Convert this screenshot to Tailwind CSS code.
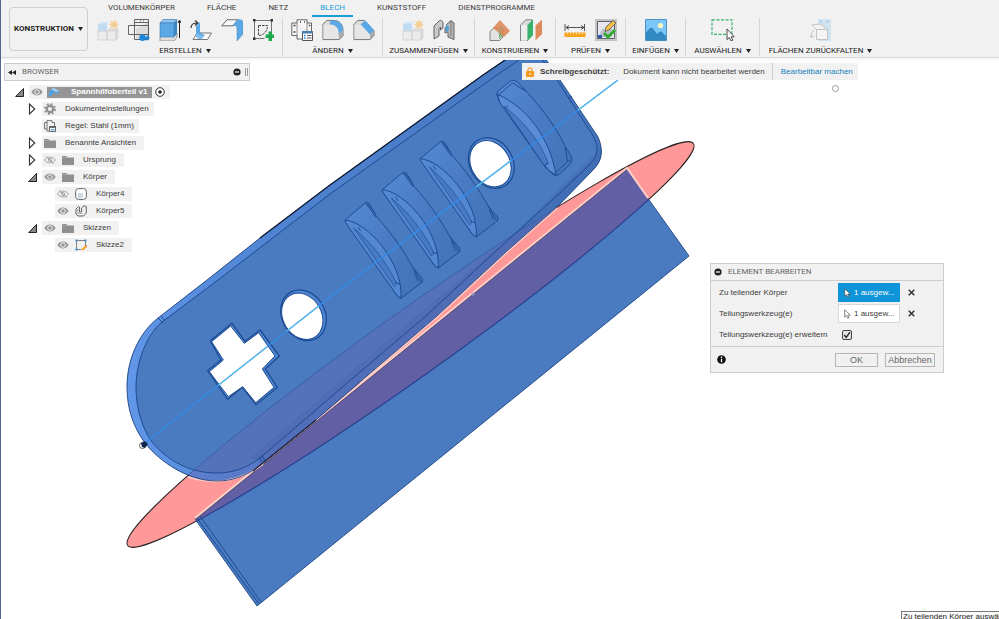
<!DOCTYPE html>
<html lang="de">
<head>
<meta charset="utf-8">
<meta name="viewport" content="width=device-width, initial-scale=1">
<title>Spannhilfoberteil v1</title>
<script src="https://cdn.jsdelivr.net/npm/@tailwindcss/browser@4"></script>
</head>
<body class="flex min-h-screen flex-col overflow-hidden border-l border-[#52658c] bg-white font-['Liberation_Sans',Arial,sans-serif] text-[8px] leading-[10px] text-[#3c3c3c]">

<!-- Shared symbols -->
<svg class="hidden" aria-hidden="true">
  <symbol id="caret" viewBox="0 0 5 4"><path d="M0 0h5L2.500 4z" fill="#222"/></symbol>
  <symbol id="closed" viewBox="0 0 8 12"><path d="M1.500 1v10L6.800 6z" fill="#fff" stroke="#333" stroke-width="1.100"/></symbol>
  <symbol id="open" viewBox="0 0 9 9"><path d="M8.500.5v8H.7z" fill="#888" stroke="#222"/></symbol>
  <symbol id="eye" viewBox="0 0 12 8"><path d="M.3 4C3-.6 9-.6 11.700 4 9 8.600 3 8.600.3 4z" fill="#979797"/><circle cx="6" cy="4" r="2.300" fill="#979797" stroke="#f1f1f1"/></symbol>
  <symbol id="eye-off" viewBox="0 0 12 8"><path d="M.5 4C3 .1 9 .1 11.500 4 9 7.900 3 7.900.5 4z" fill="none" stroke="#a0a0a0" stroke-width=".9"/><circle cx="6" cy="4" r="1.700" fill="none" stroke="#a0a0a0" stroke-width=".9"/><path d="M2 .3l8 7.400" stroke="#a0a0a0"/></symbol>
  <symbol id="folder" viewBox="0 0 12 10"><path d="M0 1h4.500l1 1.500H12V10H0z" fill="#8f8f8f"/><path d="M0 2.500h5.500" stroke="#b9b9b9" stroke-width=".6"/></symbol>
  <symbol id="cubes" viewBox="0 0 22 22">
    <path d="M1 5l3-2h8l-2 2v6H1z" fill="#cfe4f5"/><path d="M1 5h9v7H1z" fill="#bfdcf3"/>
    <path d="M1 12h9v9H1zM10 12h9v9h-9z" fill="#ececec" stroke="#cfcfcf" stroke-width=".8"/>
    <path d="M19 12l2-2v9l-2 2zM10 12l2-2h9l-2 2" fill="#dedede" stroke="#cfcfcf" stroke-width=".6"/>
    <path d="M17 0l1.100 3 2.900-1.300L19.700 4.500l2.300 1-2.300 1 1.300 2.900-2.900-1.300L17 11l-1.100-2.900L13 9.400l1.300-2.900-2.800-1 2.800-1L13 1.700 15.900 3z" fill="#f4cf95"/>
  </symbol>
  <symbol id="cursor" viewBox="0 0 10 14"><path d="M1 1v10.500l2.600-2.300 1.800 4 1.800-.8-1.800-3.900H9z" fill="#fff" stroke="#444" stroke-width=".9"/></symbol>
  <symbol id="minus" viewBox="0 0 8 8"><circle cx="4" cy="4" r="3.600" fill="#222"/><path d="M2 4h4" stroke="#fff" stroke-width="1.200"/></symbol>
</svg>

<header class="flex shrink-0 border-b border-[#dadada] bg-[#f1f1f1] font-[Roboto,sans-serif]">
  <button class="mt-[7px] ml-2 flex h-11 w-[79px] shrink-0 items-center justify-center gap-1 rounded-[4px] border border-[#cfcfcf] font-bold text-[#222]">KONSTRUKTION <svg class="h-1 w-[5px]"><use href="#caret"/></svg></button>
  <div>
    <nav class="flex h-[17px] gap-4 pl-3 leading-[15px]">
      <a href="#" class="px-2">VOLUMENKÖRPER</a>
      <a href="#" class="px-2">FLÄCHE</a>
      <a href="#" class="px-2">NETZ</a>
      <a href="#" class="border-b-2 border-[#1b9dd9] px-2 text-[#1b9dd9]">BLECH</a>
      <a href="#" class="px-2">KUNSTSTOFF</a>
      <a href="#" class="px-2">DIENSTPROGRAMME</a>
    </nav>
    <div class="mt-px mb-px flex whitespace-nowrap">
      <section class="flex w-[195px] flex-col items-center gap-[5px] border-r border-[#d6d6d6] pt-px">
        <div class="flex gap-[9px]">
          <button aria-label="Neue Komponente"><svg class="size-[22px]"><use href="#cubes"/></svg></button>
          <button aria-label="Abwicklung"><svg class="size-[22px]" viewBox="0 0 22 22"><path d="M8 10l12-7v17H8z" fill="#dcdcdc"/><path d="M6.500.5h14v20h-14zM.5 6.500h20v9H.5zM6.500 3.500h14M12 2h1m2 0h1" fill="none" stroke="#555" stroke-width=".9"/><path d="M15 19h5" stroke="#1b86dd" stroke-width="2"/><path d="M18.500 16l3.500 3-3.500 3z" fill="#1b86dd"/><circle cx="14.500" cy="18.800" r="3.200" fill="#1b86dd"/></svg></button>
          <button aria-label="Extrusion"><svg class="size-[22px]" viewBox="0 0 22 22"><path d="M1 17h14l3-3v4l-3 4H1z" fill="#ddd" stroke="#777" stroke-width=".7"/><path d="M1 4l3-3.500h14L15 4z" fill="#8cc4f2" stroke="#3c6c98" stroke-width=".6"/><path d="M1 4h14v14H1z" fill="#5aa9e6" stroke="#3c7cb2" stroke-width=".6"/><path d="M15 4l3-3.500V15l-3 3z" fill="#3b86c4"/><path d="M20.500 2v17M18.900 4l1.600-3L22 4" stroke="#222" fill="none"/></svg></button>
          <button aria-label="Biegen"><svg class="size-[22px]" viewBox="0 0 22 22"><path d="M1 9C1 5 3 4 7 4M5 1.500L8 4 5 6.500" stroke="#333" fill="none" stroke-width="1.200"/><path d="M7 14h14.500l-4 6.500H3z" fill="#fafafa" stroke="#555" stroke-width=".8"/><path d="M10 3v9c0 2 2 3 5 4l-4 4.500c-4-1-6-3-5-6V7z" fill="#5aa9e6"/><path d="M7 14c1 2 4 2.500 7 2.500l-3 3.500c-3-.5-5-2-5-4z" fill="#84bfec"/></svg></button>
          <button aria-label="Flansch"><svg class="size-[22px]" viewBox="0 0 22 22"><path d="M6 .8h11l-5 6H.8z" fill="#fafafa" stroke="#555" stroke-width=".9"/><path d="M16.500.8H19c2 0 3 1 3 3V15l-6 7V9c0-2-1.500-2.500-4-2.500z" fill="#5aa9e6" stroke="#3f88bf" stroke-width=".5"/></svg></button>
          <button aria-label="Skizze erstellen"><svg class="size-[22px]" viewBox="0 0 22 22"><path d="M2.500 1.500h17v13M2.500 1.500v18h10" fill="none" stroke="#666" stroke-width=".9"/><path d="M6.500 6.500h9c0 6-4 10-9 10z" fill="none" stroke="#444" stroke-dasharray="2.500 1"/><path d="M1 0h2.500v2.500H1zM18.500 0H21v2.500h-2.500zM1 18.500h2.500V21H1z" fill="#333"/><path d="M16.500 12.500h3.500v3h3v3.500h-3v3h-3.500v-3h-3v-3.500h3z" fill="#20a84e"/></svg></button>
        </div>
        <button class="flex items-center gap-1 text-[#222]">ERSTELLEN <svg class="h-1 w-[5px]"><use href="#caret"/></svg></button>
      </section>
      <section class="flex w-[100px] flex-col items-center gap-[5px] border-r border-[#d6d6d6] pt-px">
        <div class="flex gap-[9px]">
          <button aria-label="Blechregeln"><svg class="size-[22px]" viewBox="0 0 22 22"><path d="M6 4V.8h10V4h4.500v9M6 4H.8v12.500H6V20h5" fill="#f8f8f8" stroke="#555" stroke-width=".9"/><path d="M6 4v13M16 4v8" stroke="#777" stroke-width=".8"/><path d="M2.500 6.500h2M2.500 13h2M17.800 6.500h1.500M9 3h1m3 0h1" stroke="#444" stroke-width="1.300"/><path d="M11.500 12.500h10v9h-10z" fill="#fff" stroke="#555"/><path d="M11 12h11v2.500H11z" fill="#4d7fae"/><path d="M13 16.500h1.500M13 19h1.500" stroke="#1b86dd" stroke-width="1.400"/><path d="M16 16.500h4.500M16 19h4.500" stroke="#555"/></svg></button>
          <button aria-label="Abrunden"><svg class="size-[22px]" viewBox="0 0 23 22"><path d="M1 21V5l4-4h7c7 0 10 5 10 11v5l-4 4z" fill="#d9d9d9" stroke="#666" stroke-width=".9"/><path d="M1.500 5.500H7c7 0 10.500 4 10.500 9v6h-16z" fill="#e6e6e6"/><path d="M9 1h4c6 0 9.500 6 9 10.500l-4.500 4C18 9 14 5 8 5z" fill="#5aa9e6"/><path d="M17.500 15l4.500-4v6l-4 4z" fill="#aaa"/></svg></button>
          <button aria-label="Fase"><svg class="size-[22px]" viewBox="0 0 23 22"><path d="M1 21V5l4-4h7l10 11v5l-4 4z" fill="#d9d9d9" stroke="#666" stroke-width=".9"/><path d="M1.500 5.500h6L18 15v5.500H1.500z" fill="#e6e6e6"/><path d="M8 5l5-4 9.500 10.500-5 4z" fill="#5aa9e6"/><path d="M17.500 15.500l4.500-4V17l-4 4z" fill="#aaa"/></svg></button>
        </div>
        <button class="flex items-center gap-1 text-[#222]">ÄNDERN <svg class="h-1 w-[5px]"><use href="#caret"/></svg></button>
      </section>
      <section class="flex w-[92px] flex-col items-center gap-[5px] border-r border-[#d6d6d6] pt-px">
        <div class="flex gap-[9px]">
          <button aria-label="Neue Komponente"><svg class="size-[22px]"><use href="#cubes"/></svg></button>
          <button aria-label="Verbindung"><svg class="size-[22px]" viewBox="0 0 22 22"><path d="M1 20V7l5-5c2-1.500 4 0 4 2v5l-2.500 2V8L6 9.500V17z" fill="#c9c9c9" stroke="#555" stroke-width=".9"/><path d="M21 20.500V4l-3-2.500-4.500 4V8l-1.500 1v5l2-1 1 .5V18z" fill="#b8b8b8" stroke="#555" stroke-width=".9"/><path d="M18 2v15" stroke="#777"/><path d="M12.500 7c2-1 3.500 0 3.500 2.500S15 13 13 12.500z" fill="#4d9fd8"/></svg></button>
        </div>
        <button class="flex items-center gap-1 text-[#222]">ZUSAMMENFÜGEN <svg class="h-1 w-[5px]"><use href="#caret"/></svg></button>
      </section>
      <section class="flex w-[81px] flex-col items-center gap-[5px] border-r border-[#d6d6d6] pt-px">
        <div class="flex gap-[9px]">
          <button aria-label="Versatzebene"><svg class="size-[22px]" viewBox="0 0 22 22"><path d="M1 21.500v-9L5 9h9v9l-3.500 3.500z" fill="#e2e2e2" stroke="#777" stroke-width=".9"/><path d="M10 12l4-4v9l-4 3z" fill="#78b98b"/><path d="M4 9l7-8 10 11-6 6z" fill="#dd8455" opacity=".88"/><path d="M10 15V12l4-3.500" fill="none" stroke="#8fae84"/></svg></button>
          <button aria-label="Mittelebene"><svg class="size-[22px]" viewBox="0 0 22 22"><path d="M.5 22V6L6 .8h6V16l-5 6z" fill="#dadada" stroke="#777" stroke-width=".9"/><path d="M1 6h6v15.500H1z" fill="#ededed"/><path d="M7.500 6L13 .5V16l-5.500 6z" fill="#38b46a"/><path d="M15.500 6.500L22 .5V15l-6.500 6.500z" fill="#df8a5b"/></svg></button>
        </div>
        <button class="flex items-center gap-1 text-[#222]">KONSTRUIEREN <svg class="h-1 w-[5px]"><use href="#caret"/></svg></button>
      </section>
      <section class="flex w-[70px] flex-col items-center gap-[5px] border-r border-[#d6d6d6] pt-px">
        <div class="flex gap-[9px]">
          <button aria-label="Messen"><svg class="size-[22px]" viewBox="0 0 22 22"><path d="M1 5v7M20.500 5v7M2 8.500h18M5 6.500l-3 2 3 2M17 6.500l3 2-3 2" fill="none" stroke="#444" stroke-width=".9"/><path d="M.5 13.500h21v4.500H.5z" fill="#f9a21a"/><path d="M3.500 13.500v2m3-2v2m3-2v2m3-2v2m3-2v2m3-2v2" stroke="#fbe3b5" stroke-width=".9"/></svg></button>
          <button aria-label="Analyse"><svg class="size-[22px]" viewBox="0 0 22 22"><path d="M0 0h22v22H0z" fill="#c4c4c4"/><path d="M2.500 2.500h17v17h-17z" fill="#e6e6ee" stroke="#5d6270"/><path d="M4 17l3-7h6l4-5v13H4z" fill="#b9bfcc"/><path d="M3 16h4v3H3z" fill="#3159a8"/><path d="M11 8l7-6.500L21 4l-7 7-4 1.500z" fill="#f5c04c" stroke="#444" stroke-width=".7"/><path d="M9 14l4 4 7-7" fill="none" stroke="#35a82e" stroke-width="3"/></svg></button>
        </div>
        <button class="flex items-center gap-1 text-[#222]">PRÜFEN <svg class="h-1 w-[5px]"><use href="#caret"/></svg></button>
      </section>
      <section class="flex w-[60px] flex-col items-center gap-[5px] border-r border-[#d6d6d6] pt-px">
        <button aria-label="Bild einfügen"><svg class="size-[22px]" viewBox="0 0 22 22"><path d="M.5.5h21v21H.5z" fill="#7cc6f7" stroke="#4b94c8"/><circle cx="15.500" cy="6.500" r="2.600" fill="#fdf6bb"/><path d="M1 14c3-5 6-7 8-3l3 4c2-2 4-4 6-1l3 3v4.500H1z" fill="#3288c0"/></svg></button>
        <button class="flex items-center gap-1 text-[#222]">EINFÜGEN <svg class="h-1 w-[5px]"><use href="#caret"/></svg></button>
      </section>
      <section class="flex w-[74px] flex-col items-center gap-[5px] border-r border-[#d6d6d6] pt-px">
        <button aria-label="Auswahl"><svg class="h-[22px] w-6" viewBox="0 0 24 22"><path d="M1 .8h20v14.500H1z" fill="none" stroke="#35b36b" stroke-width="1.200" stroke-dasharray="3 1.500"/><path d="M16 10v10.500l2.400-2 1.600 3.500 1.800-.8-1.600-3.400h3z" fill="#fff" stroke="#333" stroke-width=".9"/></svg></button>
        <button class="flex items-center gap-1 text-[#222]">AUSWÄHLEN <svg class="h-1 w-[5px]"><use href="#caret"/></svg></button>
      </section>
      <section class="flex w-[121px] flex-col items-center gap-[5px] pt-px">
        <button aria-label="Flächen zurückfalten"><svg class="size-[22px]" viewBox="0 0 22 22"><path d="M8 0h13v22H8z" fill="#cfe3f1"/><circle cx="11" cy="2.500" r="1" fill="#9fc3dc"/><circle cx="17.500" cy="2.500" r="1" fill="#9fc3dc"/><path d="M6.500 10.500h11v10h-11zM6.500 10.500L2 6l8-1 7.500 5.500z" fill="#f4f4f4" stroke="#c4c4c4"/><path d="M4 11c-2 1-3 4-2.500 7M0 16l1.500 2.500L4 17" fill="none" stroke="#c4c4c4"/></svg></button>
        <button class="flex items-center gap-1 text-[#222]">FLÄCHEN ZURÜCKFALTEN <svg class="h-1 w-[5px]"><use href="#caret"/></svg></button>
      </section>
    </div>
  </div>
</header>

<main class="relative flex-1 overflow-hidden border-t-2 border-[#f6f6f6]">
  <!-- 3D viewport -->
  <svg class="absolute top-0 left-0 h-[559px] w-[998px]" viewBox="1 60 998 559" role="img" aria-label="3D-Modell">
    <defs>
      <linearGradient id="rim" x1="0" y1="0" x2="1" y2="0"><stop offset="0" stop-color="#6196e8"/><stop offset=".3" stop-color="#4f84d2"/><stop offset="1" stop-color="#4574bc"/></linearGradient>
      <linearGradient id="ribtop" x1="0" y1="0" x2="1" y2="1"><stop offset="0" stop-color="#568ad4"/><stop offset=".45" stop-color="#4a7bc4"/><stop offset="1" stop-color="#4272b8"/></linearGradient>
      <clipPath id="plate"><path d="M627 169L689 256 257 606 195 519z"/></clipPath>
      <path id="outer" d="M508 58L483 75 330 185 260 238 207 280 158 318C139 333 127 359 127 387 127 410 134 428 145 443 160 462 188 481 217 481 235 481 250 474 263 463L310 425 360 382 437 316 507 251 557 207 593 170C602 161 604 151 598 137L560 80 545 58z"/>
      <path id="inner" d="M522 58L497 75 330 194 218 280 162 322C147 334 136 362 136 387 136 408 142 428 152 442 168 461 190 473 217 473 234 473 248 467 260 458L360 372 427 315 497 250 560 193 590 164C599 155 599 146 592 134L557 80 541 58z"/>
      <clipPath id="body"><use href="#outer"/></clipPath>
      <g id="rib" stroke-linejoin="round">
        <path d="M45 435L108 382 118 386 140 425C185 475 220 525 250 580L277 610 277 621 213 670 203 664z" fill="url(#ribtop)" stroke="#1d4b93" stroke-width="3"/>
        <path d="M45 435C110 440 220 560 213 670L203 664 46 442z" fill="#5588d2" stroke="#1d4b93" stroke-width="3"/>
        <path d="M72 460C120 500 170 560 200 625L193 634z" fill="#4879c4" stroke="#1d4b93" stroke-width="2"/>
        <path d="M84 456l8 12M196 622l14 6M108 385l30 42M112 386l24 30M250 577l23 43M252 588l12 30" fill="none" stroke="#1d4b93" stroke-width="3"/>
      </g>
    </defs>

    <ellipse cx="410.500" cy="344.500" rx="347" ry="33" transform="rotate(-35.400 410.500 344.500)" fill="#ff9898" stroke="#2b2323" stroke-width="1"/>

    <path d="M627 169L689 256 257 606 195 519z" fill="#4a7bc0" stroke="#27508f" stroke-width="1"/>
    <g clip-path="url(#plate)">
      <ellipse cx="410.500" cy="344.500" rx="347" ry="33" transform="rotate(-35.400 410.500 344.500)" fill="#625fa5" stroke="#27408f" stroke-width="1.200"/>
      <path d="M197 518l62 86M200 516l61 86" stroke="#1d4b93"/>
    </g>
    <path d="M648 198L627 168 195 518" fill="none" stroke="#ffd0c8" stroke-width="2"/>
    <path d="M627 169.500L195 520" stroke="#5b4a60" stroke-width=".8"/>

    <use href="#outer" fill="url(#rim)"/>
    <use href="#inner" fill="#4a7bc0"/>
    <g clip-path="url(#body)">
      <path d="M437 316l70-65 50-44 45-40v-20L520 228 250 458l14 6z" fill="#3d68b0" opacity=".5"/>
      <ellipse cx="410.500" cy="344.500" rx="347" ry="33" transform="rotate(-35.400 410.500 344.500)" fill="#6464b0" fill-opacity=".38" stroke="#3c5fa8" stroke-width=".9"/>
    </g>
    <use href="#inner" fill="none" stroke="#1d4b93"/>
    <path d="M188 477C220 487 245 478 263 464M360 383L437 317 507 252 557 208" fill="none" stroke="#ffd0c8" stroke-width="1.800"/>
    <use href="#outer" fill="none" stroke="#1b3f7c" stroke-width=".9"/>
    <path d="M508 58L483 75 330 185 260 238" fill="none" stroke="#101c34" stroke-width="1.300"/>
    <path d="M253 471L316 420" stroke="#1d2440" stroke-width="1.300"/>
    <path d="M158 318l5 5M161 316l4 5M259 457l4 6M262 455l3 6M568 99l4-3" stroke="#1d4b93"/>

    <!-- Grip ribs -->
    <g transform="translate(330 75) scale(.33333)">
      <use href="#rib"/>
      <use href="#rib" x="112" y="-91"/>
      <use href="#rib" x="226" y="-184"/>
      <path d="M500 58Q502 48 512 42L540 19Q550 12 562 20L592 53C640 105 680 160 706 215L722 240Q730 255 722 266L690 296Q678 306 666 296L645 275 508 80z" fill="url(#ribtop)" stroke="#1d4b93" stroke-width="3"/>
      <path d="M502 58C590 95 660 190 678 300L655 285 510 84z" fill="#5a8dd6" stroke="#1d4b93" stroke-width="3"/>
      <path d="M523 95C590 145 635 210 655 265L643 272z" fill="#4879c4" stroke="#1d4b93" stroke-width="2"/>
      <path d="M503 62L548 24 590 50M706 215l6 45-34 32M712 260l10-5M522 100l12-8M642 272l12-8" fill="none" stroke="#1d4b93" stroke-width="3"/>
    </g>

    <!-- Through holes -->
    <ellipse cx="491.300" cy="163" rx="21.500" ry="26.500" transform="rotate(-30 491.300 163)" fill="#4f85d2" stroke="#1d4b93" stroke-width="1.300"/>
    <ellipse cx="490.500" cy="163.700" rx="19.300" ry="24.300" transform="rotate(-30 490.500 163.700)" fill="#fff" stroke="#1d4b93"/>
    <ellipse cx="303.500" cy="315.300" rx="21.500" ry="26.500" transform="rotate(-30 303.500 315.300)" fill="#4f85d2" stroke="#1d4b93" stroke-width="1.300"/>
    <ellipse cx="302.300" cy="316.300" rx="19.300" ry="24.300" transform="rotate(-30 302.300 316.300)" fill="#fff" stroke="#1d4b93"/>
    <g transform="translate(110 280) scale(.33333)" stroke="#1d4b93" stroke-linejoin="round">
      <path d="M366 130L405 184 450 150 508 228 466 267 502 322 438 374 397 322 353 358 293 272 333 240 301 182z" fill="#4f85d2" stroke-width="4"/>
      <path d="M362 138L403 190 446 158 495 228 457 267 492 322 437 368 398 320 355 350 298 275 340 240 305 185z" fill="#fff" stroke-width="3"/>
    </g>

    <!-- Sketch axis -->
    <path d="M145 443L330 297 618 80" fill="none" stroke="#2f8ee8" stroke-width="1.200"/>
    <path d="M218 385.500L267 347M287 331L319 306M476 187L511 160.500M578 110L618 80" stroke="#62bdec" stroke-width="1.300"/>
    <circle cx="142.500" cy="445.500" r="3" fill="#fff" stroke="#666"/>
    <path d="M141 443l4-2 3 3-3 4-3-1z" fill="#10264f"/>
    <circle cx="473" cy="294" r="1.600" fill="#9a98c8"/>
    <circle cx="835.500" cy="88.500" r="3" fill="none" stroke="#999"/>
  </svg>

  <!-- Browser panel -->
  <aside class="relative ml-[3px] w-[246px] pt-[3px]">
    <div class="flex h-[18px] items-center border border-[#cdcdcd] bg-[#f1f1f1] pr-px pl-[3px]">
      <svg class="h-[5px] w-2" viewBox="0 0 8 5"><path d="M4 0v5L0 2.500zM8 0v5L4 2.500z" fill="#222"/></svg>
      <h2 class="ml-[6px] flex-1 font-[Roboto,sans-serif] text-[#666]">BROWSER</h2>
      <button aria-label="Einklappen"><svg class="block size-2"><use href="#minus"/></svg></button>
      <span class="ml-1 h-2 w-[3px] border-x border-[#999]"></span>
    </div>
    <ul class="flex flex-col gap-[3px] pt-1">
      <li class="flex h-[14px] items-center pl-[11px]"><svg class="mr-[5px] size-[9px]"><use href="#open"/></svg>
        <div class="flex h-full items-center bg-[#f1f1f1] pr-[5px] pl-[2px]"><svg class="mr-1 h-2 w-3"><use href="#eye"/></svg>
          <span class="flex h-[11px] items-center bg-[#959595] pr-[5px] pl-[2px] font-bold text-white"><svg class="mr-3 h-2 w-[10px]" viewBox="0 0 10 8"><path d="M0 4l3-3 3 1 4 1v3L5 4 2 8H0z" fill="#4aa3e4"/><path d="M2 1l3-1 5 3-3 1z" fill="#a5d3f5"/></svg>Spannhilfoberteil v1</span>
          <svg class="ml-[3px] size-[10px]" viewBox="0 0 10 10"><circle cx="5" cy="5" r="4.300" fill="#fff" stroke="#333"/><circle cx="5" cy="5" r="1.800" fill="#222"/></svg></div></li>
      <li class="flex h-[14px] items-center pl-6"><svg class="mr-[6px] h-3 w-2"><use href="#closed"/></svg>
        <div class="flex h-full items-center bg-[#f1f1f1] pr-[5px] pl-[2px]"><svg class="mr-[9px] size-3" viewBox="0 0 12 12"><circle cx="6" cy="6" r="3.200" fill="none" stroke="#8f8f8f" stroke-width="2.200"/><circle cx="6" cy="6" r="5" fill="none" stroke="#8f8f8f" stroke-width="1.800" stroke-dasharray="2 1.927"/></svg>Dokumenteinstellungen</div></li>
      <li class="flex h-[14px] items-center pl-[38px]">
        <div class="flex h-full items-center bg-[#f1f1f1] pr-[5px] pl-[2px]"><svg class="mr-[9px] size-3" viewBox="0 0 12 12"><path d="M3 2.500V.6h5v1.900h2.500V6M3 2.500H.6v6.500H3v2h2M3 2.500v6.500" fill="none" stroke="#666" stroke-width=".9"/><path d="M5.500 6.500h6v5h-6z" fill="#fff" stroke="#555" stroke-width=".9"/><path d="M5 6h7v2H5z" fill="#666"/><path d="M7 9.800h3.500" stroke="#1b86dd"/></svg>Regel: Stahl (1mm)</div></li>
      <li class="flex h-[14px] items-center pl-6"><svg class="mr-[6px] h-3 w-2"><use href="#closed"/></svg>
        <div class="flex h-full items-center bg-[#f1f1f1] pr-2 pl-[2px]"><svg class="mr-[9px] h-[10px] w-3"><use href="#folder"/></svg>Benannte Ansichten</div></li>
      <li class="flex h-[14px] items-center pl-6"><svg class="mr-[6px] h-3 w-2"><use href="#closed"/></svg>
        <div class="flex h-full items-center bg-[#f1f1f1] pr-2 pl-[2px]"><svg class="mr-[6px] h-2 w-3"><use href="#eye-off"/></svg><svg class="mr-[9px] h-[10px] w-3"><use href="#folder"/></svg>Ursprung</div></li>
      <li class="flex h-[14px] items-center pl-6"><svg class="mr-[5px] size-[9px]"><use href="#open"/></svg>
        <div class="flex h-full items-center bg-[#f1f1f1] pr-2 pl-[2px]"><svg class="mr-[6px] h-2 w-3"><use href="#eye"/></svg><svg class="mr-[9px] h-[10px] w-3"><use href="#folder"/></svg>Körper</div></li>
      <li class="flex h-[14px] items-center pl-[51px]">
        <div class="flex h-full items-center bg-[#f1f1f1] pr-2 pl-[2px]"><svg class="mr-[6px] h-2 w-3"><use href="#eye-off"/></svg><svg class="mr-[9px] size-3" viewBox="0 0 12 12"><rect x=".6" y=".6" width="10.800" height="10.800" rx="3" fill="#fff" stroke="#666"/><path d="M3 5h5v5H3z" fill="#cfdae4"/></svg>Körper4</div></li>
      <li class="flex h-[14px] items-center pl-[51px]">
        <div class="flex h-full items-center bg-[#f1f1f1] pr-2 pl-[2px]"><svg class="mr-[6px] h-2 w-3"><use href="#eye"/></svg><svg class="mr-[9px] size-3" viewBox="0 0 12 12"><path d="M1 4l2.500-2.500L4.500 2v5h2V3L9 .7l2.300 1V8L8.500 11H3L1 9z" fill="#eee" stroke="#555" stroke-width=".9"/><path d="M2.800 4v4.500h4.700" fill="none" stroke="#999" stroke-width=".7"/></svg>Körper5</div></li>
      <li class="flex h-[14px] items-center pl-6"><svg class="mr-[5px] size-[9px]"><use href="#open"/></svg>
        <div class="flex h-full items-center bg-[#f1f1f1] pr-2 pl-[2px]"><svg class="mr-[6px] h-2 w-3"><use href="#eye"/></svg><svg class="mr-[9px] h-[10px] w-3"><use href="#folder"/></svg>Skizzen</div></li>
      <li class="flex h-[14px] items-center pl-[51px]">
        <div class="flex h-full items-center bg-[#f1f1f1] pr-2 pl-[2px]"><svg class="mr-[6px] h-2 w-3"><use href="#eye"/></svg><svg class="mr-[9px] size-3" viewBox="0 0 12 12"><path d="M1.500 1.500h9V7M1.500 1.500v9H6" fill="none" stroke="#666" stroke-width=".8"/><path d="M.5.500h2v2h-2zM9.500.5h2v2h-2zM.5 9.500h2v2h-2z" fill="#3a8fd6"/><path d="M6.500 11.500l.5-2 3.500-3L12 8 8.500 11z" fill="#f5a623"/><path d="M10.500 6.500L12 8v-1.500z" fill="#d33"/></svg>Skizze2</div></li>
    </ul>
  </aside>

  <!-- Read-only notice -->
  <div class="absolute top-[3px] left-[521px] flex h-[17px] items-center whitespace-nowrap bg-[#f1f1f1]">
    <svg class="ml-1 h-[10px] w-2" viewBox="0 0 8 10"><path d="M2 5V3c0-3 4-3 4 0v2" fill="none" stroke="#f59a1b" stroke-width="1.200"/><rect y="4" width="8" height="6" rx=".8" fill="#f59a1b"/><path d="M4 6v2" stroke="#fff"/></svg>
    <strong class="mr-[14px] ml-[6px]">Schreibgeschützt:</strong>
    <span>Dokument kann nicht bearbeitet werden</span>
    <a href="#" class="ml-[7px] flex h-full items-center border-l border-[#cfcfcf] pr-[5px] pl-2 text-[#1480bd]">Bearbeitbar machen</a>
  </div>

  <!-- Edit dialog -->
  <form class="absolute top-[203px] right-[55px] w-[234px] border border-[#cdcdcd] bg-[#f1f1f1]">
    <h2 class="flex h-[17px] items-center gap-[6px] border-b border-[#cdcdcd] pl-[3px] font-[Roboto,sans-serif] text-[#666]"><svg class="size-2"><use href="#minus"/></svg>ELEMENT BEARBEITEN</h2>
    <div class="grid grid-cols-[119px_62px_1fr] grid-rows-[21px_21px_21px] items-center pt-px pb-px pl-2">
      <label for="target">Zu teilender Körper</label>
      <button id="target" type="button" class="flex h-[19px] items-center gap-[3px] bg-[#0e94d8] pl-[6px] text-white"><svg class="h-[10px] w-[7px]"><use href="#cursor"/></svg>1 ausgew...</button>
      <button type="button" aria-label="Auswahl löschen" class="pl-2"><svg class="block size-[7px]" viewBox="0 0 7 7"><path d="M.7.7l5.600 5.600M6.300.7L.7 6.300" stroke="#333" stroke-width="1.500"/></svg></button>
      <label for="tool">Teilungswerkzeug(e)</label>
      <button id="tool" type="button" class="flex h-[19px] items-center gap-[3px] border border-[#d8d8d8] bg-white pl-[5px]"><svg class="h-[10px] w-[7px]"><use href="#cursor"/></svg>1 ausgew...</button>
      <button type="button" aria-label="Auswahl löschen" class="pl-2"><svg class="block size-[7px]" viewBox="0 0 7 7"><path d="M.7.7l5.600 5.600M6.300.7L.7 6.300" stroke="#333" stroke-width="1.500"/></svg></button>
      <label for="extend" class="whitespace-nowrap">Teilungswerkzeug(e) erweitern</label>
      <span class="ml-1 grid size-[10px]"><input id="extend" type="checkbox" checked class="col-start-1 row-start-1 size-[10px] appearance-none rounded-[2px] border border-[#444] bg-[#e4e4e4]"><svg class="pointer-events-none col-start-1 row-start-1 size-[10px]" viewBox="0 0 10 10"><path d="M2.200 5l2 2.500L8 2.200" fill="none" stroke="#222" stroke-width="1.300"/></svg></span>
    </div>
    <div class="flex h-[26px] items-center border-t border-[#cdcdcd] pr-2 pl-[6px] text-[9px] text-[#666]">
      <svg class="mr-auto size-[9px]" viewBox="0 0 9 9"><circle cx="4.500" cy="4.500" r="4.300" fill="#111"/><path d="M4.500 1.600v1.300M4.500 3.800v3.400" stroke="#fff" stroke-width="1.300"/></svg>
      <button type="button" class="h-[14px] w-[43px] border border-[#b5b5b5]">OK</button>
      <button type="button" class="ml-[7px] h-[14px] w-[50px] border border-[#b5b5b5]">Abbrechen</button>
    </div>
  </form>

  <div class="absolute top-[551px] left-[900px] border border-[#777] bg-[#fafafa] px-px whitespace-nowrap text-[#222]">Zu teilenden Körper auswählen</div>
</main>
</body>
</html>
